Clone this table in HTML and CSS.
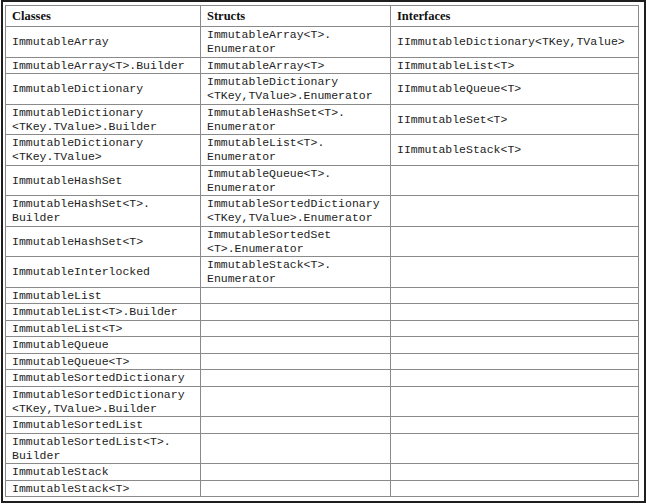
FILE: index.html
```html
<!DOCTYPE html>
<html>
<head>
<meta charset="utf-8">
<link rel="stylesheet" href="styles.css">
</head>
<body>
<div class="frame">
<table class="grid">
<colgroup><col class="c1"><col class="c2"><col class="c3"></colgroup>
<thead>
<tr><th>Classes</th><th>Structs</th><th>Interfaces</th></tr>
</thead>
<tbody>
<tr class="dbl"><td>ImmutableArray</td><td>ImmutableArray&lt;T&gt;.<br>Enumerator</td><td>IImmutableDictionary&lt;TKey,TValue&gt;</td></tr>
<tr><td>ImmutableArray&lt;T&gt;.Builder</td><td>ImmutableArray&lt;T&gt;</td><td>IImmutableList&lt;T&gt;</td></tr>
<tr class="dbl"><td>ImmutableDictionary</td><td>ImmutableDictionary<br>&lt;TKey,TValue&gt;.Enumerator</td><td>IImmutableQueue&lt;T&gt;</td></tr>
<tr class="dbl"><td>ImmutableDictionary<br>&lt;TKey.TValue&gt;.Builder</td><td>ImmutableHashSet&lt;T&gt;.<br>Enumerator</td><td>IImmutableSet&lt;T&gt;</td></tr>
<tr class="dbl"><td>ImmutableDictionary<br>&lt;TKey.TValue&gt;</td><td>ImmutableList&lt;T&gt;.<br>Enumerator</td><td>IImmutableStack&lt;T&gt;</td></tr>
<tr class="dbl"><td>ImmutableHashSet</td><td>ImmutableQueue&lt;T&gt;.<br>Enumerator</td><td></td></tr>
<tr class="dbl"><td>ImmutableHashSet&lt;T&gt;.<br>Builder</td><td>ImmutableSortedDictionary<br>&lt;TKey,TValue&gt;.Enumerator</td><td></td></tr>
<tr class="dbl"><td>ImmutableHashSet&lt;T&gt;</td><td>ImmutableSortedSet<br>&lt;T&gt;.Enumerator</td><td></td></tr>
<tr class="dbl"><td>ImmutableInterlocked</td><td>ImmutableStack&lt;T&gt;.<br>Enumerator</td><td></td></tr>
<tr><td>ImmutableList</td><td></td><td></td></tr>
<tr><td>ImmutableList&lt;T&gt;.Builder</td><td></td><td></td></tr>
<tr><td>ImmutableList&lt;T&gt;</td><td></td><td></td></tr>
<tr><td>ImmutableQueue</td><td></td><td></td></tr>
<tr><td>ImmutableQueue&lt;T&gt;</td><td></td><td></td></tr>
<tr><td>ImmutableSortedDictionary</td><td></td><td></td></tr>
<tr class="dbl"><td>ImmutableSortedDictionary<br>&lt;TKey,TValue&gt;.Builder</td><td></td><td></td></tr>
<tr><td>ImmutableSortedList</td><td></td><td></td></tr>
<tr class="dbl"><td>ImmutableSortedList&lt;T&gt;.<br>Builder</td><td></td><td></td></tr>
<tr><td>ImmutableStack</td><td></td><td></td></tr>
<tr><td>ImmutableStack&lt;T&gt;</td><td></td><td></td></tr>
</tbody>
</table>
</div>
</body>
</html>
```
FILE: styles.css
```css
html, body {
  margin: 0;
  padding: 0;
  background: #ffffff;
}
.frame {
  margin: 0 0 0 1px;
  width: 637px;
  height: 496px;
  border: 2px solid #1e1e1e;
  padding: 3px 2px 0 2px;
}
.grid {
  border-collapse: collapse;
  table-layout: fixed;
  width: 633px;
  border: 1px solid #8a8a8a;
}
.c1 { width: 195px; }
.c2 { width: 190px; }
.c3 { width: 248px; }
.grid th, .grid td {
  border: 1px solid #8a8a8a;
  vertical-align: middle;
  text-align: left;
  white-space: nowrap;
}
.grid th {
  font-family: "Liberation Serif", "DejaVu Serif", serif;
  font-weight: bold;
  font-size: 12.5px;
  color: #111;
  height: 20px;
  padding: 0 6px;
  line-height: 20px;
}
.grid td {
  font-family: "Liberation Mono", "DejaVu Sans Mono", monospace;
  font-size: 11.5px;
  color: #222;
  line-height: 14px;
  padding: 1px 6px 0.5px 6px;
}
```
